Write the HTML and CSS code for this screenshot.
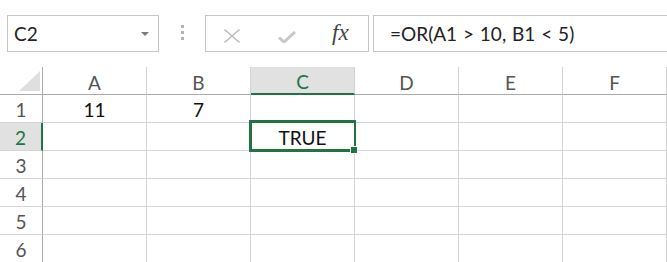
FILE: index.html
```html
<!DOCTYPE html>
<html>
<head>
<meta charset="utf-8">
<link rel="stylesheet" href="styles.css">
</head>
<body>
<div class="toolbar">
  <div class="namebox">
    <span class="name">C2</span>
    <svg class="dd" width="8" height="4" viewBox="0 0 8 4"><polygon points="0,0 8,0 4,4" fill="#7a7a7a"/></svg>
  </div>
  <div class="grip"><i></i><i></i><i></i></div>
  <div class="fxgroup">
    <svg class="ico-x" width="18" height="14" viewBox="0 0 18 14"><path d="M1.5 0.5 L16.5 13.5 M16.5 0.5 L1.5 13.5" stroke="#bdbdbd" stroke-width="1.5" fill="none"/></svg>
    <svg class="ico-check" width="18" height="12" viewBox="0 0 18 12"><path d="M1 6.5 L6 11 L17 1" stroke="#c8c8c8" stroke-width="3" fill="none"/></svg>
    <span class="fx">fx</span>
  </div>
  <div class="formula">=OR(A1 &gt; 10, B1 &lt; 5)</div>
</div>
<div class="sheet">
  <div class="corner"><svg width="21" height="20" viewBox="0 0 21 20"><polygon points="21,0 21,20 0,20" fill="#dfdfdf"/></svg></div>
  <div class="ch">A</div><div class="ch">B</div><div class="ch sel">C</div><div class="ch">D</div><div class="ch">E</div><div class="ch">F</div>

  <div class="rh">1</div><div class="c">11</div><div class="c">7</div><div class="c"></div><div class="c"></div><div class="c"></div><div class="c"></div>
  <div class="rh sel">2</div><div class="c"></div><div class="c"></div><div class="c">TRUE</div><div class="c"></div><div class="c"></div><div class="c"></div>
  <div class="rh">3</div><div class="c"></div><div class="c"></div><div class="c"></div><div class="c"></div><div class="c"></div><div class="c"></div>
  <div class="rh">4</div><div class="c"></div><div class="c"></div><div class="c"></div><div class="c"></div><div class="c"></div><div class="c"></div>
  <div class="rh">5</div><div class="c"></div><div class="c"></div><div class="c"></div><div class="c"></div><div class="c"></div><div class="c"></div>
  <div class="rh">6</div><div class="c"></div><div class="c"></div><div class="c"></div><div class="c"></div><div class="c"></div><div class="c"></div>

  <div class="selection"></div>
  <div class="handle"></div>
</div>
</body>
</html>
```

FILE: styles.css
```css
* { box-sizing: border-box; }
html, body { margin: 0; padding: 0; background: #fff; overflow: hidden; }
body { width: 667px; height: 262px; font-family: Lato, "Open Sans", sans-serif; }

.toolbar {
  height: 67px;
  padding: 15px 0 0 7px;
  display: flex;
  align-items: flex-start;
}
.namebox {
  width: 152px;
  height: 37px;
  border: 1px solid #c6c6c6;
  display: flex;
  align-items: center;
  justify-content: space-between;
  padding: 0 9px 0 6px;
}
.name { font-size: 19px; color: #222; }
.dd { display: block; margin-top: 1px; }
.grip {
  width: 46px;
  height: 37px;
  display: flex;
  flex-direction: column;
  align-items: center;
  justify-content: center;
  gap: 3px;
  padding-bottom: 3px;
}
.grip i { display: block; width: 3px; height: 3px; background: #b4b4b4; }
.fxgroup {
  width: 164px;
  height: 37px;
  border: 1px solid #c6c6c6;
  display: flex;
  align-items: center;
  padding-left: 17px;
}
.ico-x { display: block; margin-top: 4px; }
.ico-check { display: block; margin-left: 37px; margin-top: 6px; }
.fx {
  margin-left: 36px;
  font-family: "Liberation Serif", "DejaVu Serif", serif;
  font-style: italic;
  font-size: 23px;
  color: #444;
  letter-spacing: 0;
  padding-bottom: 2px;
}
.formula {
  margin-left: 4px;
  flex: 1;
  height: 37px;
  border: 1px solid #c6c6c6;
  border-right: none;
  display: flex;
  align-items: center;
  padding-left: 16px;
  font-size: 19px;
  color: #222;
  word-spacing: 1px;
}

.sheet {
  position: relative;
  display: grid;
  grid-template-columns: 43px repeat(6, 104px);
  grid-auto-rows: 28px;
}
.corner, .ch, .rh, .c {
  border-right: 1px solid #d4d4d4;
  border-bottom: 1px solid #d4d4d4;
  display: flex;
  align-items: center;
  justify-content: center;
}
.corner { border-right-color: #ababab; border-bottom-color: #ababab; justify-content: flex-start; align-items: flex-start; padding: 4px 0 0 19px; }
.corner svg { display: block; }
.ch {
  border-bottom-color: #ababab;
  font-size: 19px;
  color: #555;
  padding-top: 3px;
}
.ch.sel { background: #e1e1e1; border-bottom: 2px solid #217346; color: #217346; }
.rh {
  border-right-color: #ababab;
  font-size: 19px;
  color: #555;
  padding-top: 2px;
}
.rh.sel { background: #e1e1e1; border-right: 2px solid #217346; color: #217346; }
.c { font-size: 19px; color: #111; padding-top: 2px; }

.selection {
  position: absolute;
  left: 249px;
  top: 53px;
  width: 107px;
  height: 32px;
  border: 3px solid #217346;
  border-right-width: 2px;
}
.handle {
  position: absolute;
  left: 350px;
  top: 79px;
  width: 8px;
  height: 8px;
  background: #217346;
  border: 1px solid #fff;
}
```
